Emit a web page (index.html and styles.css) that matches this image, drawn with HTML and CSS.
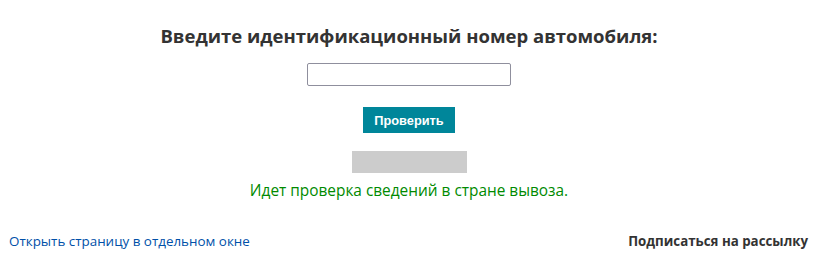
FILE: index.html
```html
<!DOCTYPE html>
<html lang="ru">
<head>
<meta charset="utf-8">
<title>Проверка</title>
<link rel="stylesheet" href="styles.css">
</head>
<body>
<main class="check">
  <h2 class="check__title">Введите идентификационный номер автомобиля:</h2>
  <input class="check__input" type="text">
  <button class="check__btn" type="button">Проверить</button>
  <div class="check__progress"></div>
  <p class="check__status">Идет проверка сведений в стране вывоза.</p>
</main>
<footer class="foot">
  <a class="foot__link" href="#">Открыть страницу в отдельном окне</a>
  <span class="foot__sub">Подписаться на рассылку</span>
</footer>
</body>
</html>
```
FILE: styles.css
```css
html, body {
  margin: 0;
  padding: 0;
  background: #fff;
}
body {
  font-family: "Open Sans", "DejaVu Sans", sans-serif;
  width: 814px;
  height: 255px;
  overflow: hidden;
}
.check {
  display: flex;
  flex-direction: column;
  align-items: center;
  padding-top: 24px;
  padding-left: 4px;
}
.check__title {
  margin: 0;
  font-size: 18.5px;
  line-height: 24px;
  font-weight: 700;
  color: #333;
}
.check__input {
  margin-top: 15px;
  width: 204px;
  height: 23px;
  box-sizing: border-box;
  border: 1px solid #8f8f9d;
  border-radius: 2px;
  padding: 0;
  background: #fff;
}
.check__btn {
  margin-top: 21px;
  width: 92px;
  height: 26px;
  border: 0;
  background: #00869a;
  color: #fff;
  font-family: "Liberation Sans", Arial, sans-serif;
  font-weight: 700;
  font-size: 12.8px;
  padding: 0;
}
.check__progress {
  margin-top: 18px;
  width: 115px;
  height: 22px;
  background: #cccccc;
}
.check__status {
  margin: 8px 0 0;
  font-size: 15.4px;
  line-height: 20px;
  color: #008a00;
}
.foot {
  display: flex;
  justify-content: space-between;
  align-items: center;
  padding: 31px 6px 0 9px;
}
.foot__link {
  font-size: 13.4px;
  color: #0050a8;
  text-decoration: none;
}
.foot__sub {
  font-size: 13.3px;
  font-weight: 700;
  color: #333;
}
```
